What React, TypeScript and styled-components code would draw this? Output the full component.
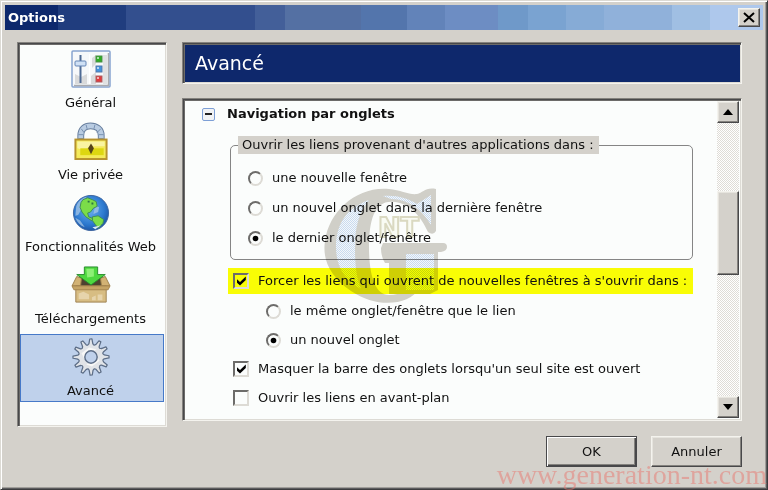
import React from "react";
import styled, { createGlobalStyle, css } from "styled-components";

const c = {
  face: "#d4d1cb",
  paper: "#fbfdfc",
  shadow: "#84827e",
  dark: "#48484a",
  light: "#f4f3ee",
  navy: "#0e286c",
};

const Global = createGlobalStyle`
  * { box-sizing: border-box; }
  body {
    margin: 0;
    background: ${c.face};
    color: #111;
    font: 13px/18px "DejaVu Sans", sans-serif;
  }
  button, input { font: inherit; color: inherit; margin: 0; }
`;

const raised = css`
  background: ${c.face};
  border: 1px solid;
  border-color: ${c.light} ${c.dark} ${c.dark} ${c.light};
  box-shadow: inset -1px -1px 0 ${c.shadow}, inset 1px 1px 0 #e6e4de;
`;

const sunken = css`
  border: 1px solid;
  border-color: ${c.shadow} ${c.light} ${c.light} ${c.shadow};
  box-shadow: inset 1px 1px 0 ${c.dark}, inset 2px 2px 0 #6c6b69, inset -1px -1px 0 #dddbd5;
`;

const Window = styled.main`
  position: relative;
  display: flex;
  flex-direction: column;
  min-height: 100vh;
  padding: 4px;
  border: 1px solid;
  border-color: #dcdad4 #3c3c3e #3c3c3e #dcdad4;
  box-shadow: inset 1px 1px 0 #fff, inset -1px -1px 0 #5c5c5e, inset -2px -2px 0 #a09e9a;
`;

const TitleBar = styled.header`
  display: flex;
  align-items: center;
  justify-content: space-between;
  height: 25px;
  padding: 0 3px;
  color: #fff;
  font-weight: bold;
  background: linear-gradient(
    90deg,
    #0d286c 7%, #203d7e 7% 16%, #334f8e 16% 33%, #435f99 33% 37%, #5470a3 37% 47%,
    #5375ac 47% 53%, #6283b9 53% 58%, #6d8dc3 58% 65%, #6f99c9 65% 69%, #7aa3d1 69% 74%,
    #86abd6 74% 79%, #90b1da 79% 88%, #a0bfe3 88% 93%, #aec8ec 93%
  );
`;

const TitleText = styled.h1`
  margin: 0;
  font-size: 13px;
  line-height: 18px;
`;

const CloseButton = styled.button`
  ${raised}
  display: grid;
  place-items: center;
  width: 22px;
  height: 19px;
  padding: 0;
`;

const Body = styled.div`
  display: grid;
  grid-template-columns: 150px minmax(0, 1fr);
  gap: 15px;
  flex: 1;
  padding: 12px 21px 0 12px;
`;

const Sidebar = styled.nav`
  ${sunken}
  display: flex;
  flex-direction: column;
  gap: 4px;
  margin-bottom: -6px;
  padding: 3px 2px;
  background: ${c.paper};
`;

const Category = styled.button<{ $selected?: boolean }>`
  display: flex;
  flex-direction: column;
  align-items: center;
  gap: 6px;
  height: 68px;
  padding: 3px 3px 0 0;
  border: 1px solid ${(p) => (p.$selected ? "#4679c8" : "transparent")};
  background: ${(p) => (p.$selected ? "#bfd1eb" : "transparent")};
  white-space: nowrap;
`;

const Main = styled.section`
  display: flex;
  flex-direction: column;
  gap: 14px;
  min-width: 0;
`;

const Heading = styled.h2`
  ${sunken}
  margin: 0;
  padding: 9px 12px;
  background: ${c.navy};
  color: #fff;
  font-size: 19px;
  line-height: 22px;
  font-weight: normal;
`;

const Panel = styled.div`
  ${sunken}
  display: grid;
  grid-template-columns: minmax(0, 1fr) 22px;
  flex: 1;
  padding: 2px;
  background: ${c.paper};
`;

const Content = styled.div`
  position: relative;
  padding: 4px 24px 3px 17px;
`;

const GroupTitle = styled.h3`
  display: flex;
  align-items: center;
  gap: 12px;
  margin: 0 0 13px;
  font-size: 13px;
  line-height: 18px;
`;

const Toggle = styled.button`
  display: grid;
  place-items: center;
  width: 13px;
  height: 13px;
  padding: 0;
  border: 1px solid #7d9fd6;
  border-radius: 2px;
  background: #f1f3f5;
`;

const Settings = styled.div`
  padding-left: 26px;
`;

const Group = styled.fieldset`
  display: flex;
  flex-direction: column;
  gap: 12px;
  min-width: 0;
  margin: 0 0 8px 2px;
  padding: 15px 17px 12px;
  border: 1px solid #858585;
  border-radius: 5px;
`;

const Legend = styled.legend`
  margin-left: -10px;
  padding: 0 5px 0 4px;
  background: ${c.face};
`;

const OptionRow = styled.label<{ $marked?: boolean }>`
  display: flex;
  align-items: center;
  gap: 9px;
  width: 100%;
  white-space: nowrap;
  ${(p) =>
    p.$marked &&
    css`
      background: #f9fd05;
    `}
`;

const SubOptions = styled.div`
  display: flex;
  flex-direction: column;
  gap: 11px;
  padding-left: 38px;
`;

const OptionList = styled.div`
  display: flex;
  flex-direction: column;
  gap: 11px;

  > ${OptionRow} {
    padding-left: 5px;
  }
  > ${OptionRow}:first-child {
    padding-top: 4px;
    padding-bottom: 4px;
    margin-bottom: -3px;
  }
`;

const Mark = styled.span`
  display: grid;
  place-items: center;
  flex: none;

  > * {
    grid-area: 1 / 1;
  }
  > svg {
    pointer-events: none;
  }
`;

const Tick = styled.input`
  appearance: none;
  width: 16px;
  height: 16px;
  background: transparent;
  border: 2px solid;
  border-color: #6d6c6a #dddbd5 #dddbd5 #6d6c6a;

  &:not(:checked) + svg {
    display: none;
  }
`;

const Radio = styled(Tick)`
  width: 15px;
  height: 15px;
  border-radius: 50%;
`;

const Option = ({
  kind,
  name,
  label,
  checked,
  marked,
}: {
  kind: "radio" | "checkbox";
  name: string;
  label: string;
  checked?: boolean;
  marked?: boolean;
}) => (
  <OptionRow $marked={marked}>
    <Mark>
      {kind === "radio" ? (
        <>
          <Radio type="radio" name={name} defaultChecked={checked} />
          <svg width="15" height="15">
            <circle cx="7.5" cy="7.5" r="2.8" fill="#000" />
          </svg>
        </>
      ) : (
        <>
          <Tick type="checkbox" name={name} defaultChecked={checked} />
          <svg width="16" height="16">
            <path d="M4 6.2 7 9 12.8 3.4V7L7 12.6 4 9.8Z" fill="#000" />
          </svg>
        </>
      )}
    </Mark>
    {label}
  </OptionRow>
);

const ScrollBar = styled.div`
  display: grid;
  grid-template-rows: 22px 1fr 22px;
  background: repeating-conic-gradient(#fff 0 25%, #dedcd6 0 50%) 0 0 / 2px 2px;
`;

const ScrollButton = styled.button`
  ${raised}
  display: grid;
  place-items: center;
  padding: 0;
`;

const Track = styled.div`
  display: grid;
  grid-template-rows: 69fr 84fr 122fr;
`;

const Thumb = styled.div`
  ${raised}
  grid-row: 2;
`;

const Footer = styled.footer`
  display: flex;
  justify-content: flex-end;
  gap: 14px;
  padding: 15px 21px 18px;
`;

const Action = styled.button<{ $primary?: boolean }>`
  ${raised}
  width: 91px;
  height: 31px;
  padding: 0;
  ${(p) =>
    p.$primary &&
    css`
      border-color: ${c.dark};
      box-shadow: inset 1px 1px 0 #fff, inset -1px -1px 0 ${c.dark}, inset -2px -2px 0 ${c.shadow};
    `}
`;

const SiteStamp = styled.div`
  position: absolute;
  right: 0;
  bottom: 3px;
  color: #e87870;
  opacity: 0.5;
  font: 28px/22px "Liberation Serif", serif;
  pointer-events: none;
`;

const Logo = styled.svg`
  position: absolute;
  left: 138px;
  top: 86px;
  mix-blend-mode: multiply;
  pointer-events: none;
`;

const SettingsIcon = () => (
  <svg width="40" height="38" viewBox="0 0 40 38">
    <rect x="1" y="1" width="38" height="36" rx="1" fill="#f6f8fa" stroke="#88a4d0" strokeWidth="1.5" />
    <path d="M3 35.5H37.5V3" fill="none" stroke="#a9aaae" strokeWidth="1.5" />
    <path d="M4 24l6 3 6-3v10H4zM21 8l4-3v9l-4 4zM20 26l5-4v12h-5z" fill="#d9dadb" />
    <path d="M32 5h4v29h-4z" fill="#e0e1e2" />
    <path d="M18.500 4V34" stroke="#fff" />
    <path d="M9.500 5V33" stroke="#4e6a94" strokeWidth="2" />
    <rect x="4" y="11" width="11" height="5" rx="1" fill="#cfe0f5" stroke="#6585b5" />
    <rect x="25" y="6" width="6" height="6" fill="#2fae24" stroke="#4b8d47" />
    <rect x="25" y="16" width="6" height="6" fill="#4294df" stroke="#5579a9" />
    <rect x="25" y="26" width="6" height="6" fill="#e33b3e" stroke="#a76163" />
    <path d="M26 7h2v2h-2zM26 17h2v2h-2zM26 27h2v2h-2z" fill="#fff" opacity=".6" />
  </svg>
);

const LockIcon = () => (
  <svg width="38" height="38" viewBox="0 0 38 39">
    <path d="M8.500 18V14C8.500 7 13 4 18.500 4S29.500 7 29.500 14v4" fill="none" stroke="#687f9e" strokeWidth="7" />
    <path d="M8.500 18V14C8.500 7 13 4 18.500 4S29.500 7 29.500 14v4" fill="none" stroke="#b9cce2" strokeWidth="5" />
    <path d="M6 17h5M6 13h5M9 7l3 4M14 3l1 4M23 3l-1 4M29 7l-4 4M27 13h5M27 17h5" stroke="#7790b0" />
    <rect x="3" y="18" width="32" height="20" fill="#f4ea5a" stroke="#b6922e" strokeWidth="2" />
    <path d="M5 20h28v5H18l-6 4-7-2z" fill="#f9f4a2" />
    <path d="M8 27h24v7H8z" fill="#ddd711" />
    <path d="M19 22l3 5-3 6-3-6z" fill="#55451a" />
  </svg>
);

const GlobeIcon = () => (
  <svg width="38" height="38" viewBox="0 0 39 40">
    <defs>
      <radialGradient id="sea" cx=".45" cy=".4" r=".65">
        <stop offset="0" stopColor="#6eb2ef" />
        <stop offset=".65" stopColor="#2c79cf" />
        <stop offset="1" stopColor="#1a4f9e" />
      </radialGradient>
    </defs>
    <circle cx="19.500" cy="20" r="18.500" fill="url(#sea)" stroke="#3d659f" />
    <path d="M4 13C6 7 11 4 15 3l-3 5-2 7-4 7-3 1zM24 12l4 2-1 5-5 2zM3 25l5 3 5 7C8 33 5 30 3 25z" fill="#a6c5e6" opacity=".75" />
    <path d="M11 6l5-2 5 2 4 2 1 5-4 2-3 4-3 1 1 4 5 2-2 2-6-4-4-5-2-5 1-5z" fill="#7bdd49" stroke="#3d8c55" />
    <path d="M21 24l6-1 6 4-1 4-5 5-3-4-3-4z" fill="#7bdd49" stroke="#3d8c55" />
    <path d="M16 8h2M20 10h2" stroke="#2d7542" strokeWidth="2" />
    <path d="M21 35l5-1 4-1-6 4z" fill="#d9e9f7" />
  </svg>
);

const DownloadIcon = () => (
  <svg width="40" height="38" viewBox="0 0 42 40">
    <path d="M8 12h26l3 10H5z" fill="#4d4230" />
    <path d="M1 21L6 11l5 2-1 8zM41 21l-5-10-5 2 1 8z" fill="#d2b274" stroke="#9a7d48" />
    <path d="M5 21h32v17H5z" fill="#d7bd83" stroke="#9e8251" />
    <path d="M1 21h40l-2 4H3z" fill="#c5a465" stroke="#a5854e" />
    <path d="M8 29l5-2 6 3v5H8zM22 33l4-2v5h-4zM28 30h5v6h-5z" fill="#e6d4ac" />
    <path d="M14 1h14v8h8L21 20 6 9h8z" fill="#4dd83f" stroke="#278b2b" />
    <path d="M16 3h8v8l-7 1z" fill="#8cf075" />
  </svg>
);

const gearPath = Array.from({ length: 12 }, (_, i) => {
  const at = (r: number, d: number) => {
    const a = ((i * 30 + d) * Math.PI) / 180;
    return `${(20 + r * Math.sin(a)).toFixed(2)} ${(20 - r * Math.cos(a)).toFixed(2)}`;
  };
  return `${i ? "L" : "M"}${at(14, -9)}L${at(19, -4)}L${at(19, 3)}L${at(14, 8)}Q${at(12, 14)} ${at(14, 20)}`;
}).join("");

const GearIcon = () => (
  <svg width="38" height="38" viewBox="0 0 40 40">
    <path d={gearPath + "Z"} fill="#e1e4e8" stroke="#5d6e87" strokeWidth="1.300" strokeLinejoin="round" />
    <path d="M10 16l8-6 8 2-6 3-7 7zM27 21l2 3-8 6-6-2z" fill="#f8f8f7" />
    <circle cx="20" cy="20" r="6.500" fill="#bfd1eb" stroke="#5d6e87" strokeWidth="1.500" />
  </svg>
);

const GLogo = () => (
  <Logo width="126" height="118" viewBox="0 0 126 118" aria-hidden="true">
    <defs>
      <pattern id="dots" width="2" height="2" patternUnits="userSpaceOnUse">
        <rect width="2" height="2" fill="#f8fafd" />
        <path d="M0 0h1v1H0zM1 1h1v1H1z" fill="#ccdcf2" />
      </pattern>
    </defs>
    <path
      d="M113 2v42q-3 5-8 1C98 30 88 17 72 15C52 12 46 32 46 60s6 48 20 48c12 0 20-6 30-6C86 118 54 122 28 104C8 90 -1 74 2 54C6 24 34 -1 66 2c12 1 20 6 28 5 6-1 8-7 19-5z"
      fill={c.face}
    />
    <path d="M46 13C23 21 13 38 13 60c0 18 8 34 25 42-5-12-6-26-6-42 0-20 4-35 14-47z" fill="url(#dots)" />
    <path d="M60 9c14-1 24 2 34 8l14-9v30C100 24 86 12 68 12z" fill="url(#dots)" />
    <path d="M60 56h60q4 0 4 4t-6 5h-3v38l-8 4H66V76h-4q-4-6-4-15z" fill={c.face} />
    <path d="M83 67h28v36H83z" fill="url(#dots)" />
    <text
      x="55"
      y="50"
      fontFamily="DejaVu Sans"
      fontWeight="bold"
      fontSize="27"
      fill="#fdfdf6"
      stroke="#dedbc4"
      strokeWidth="2"
    >
      NT
    </text>
  </Logo>
);

const categories = [
  { label: "Général", icon: <SettingsIcon /> },
  { label: "Vie privée", icon: <LockIcon /> },
  { label: "Fonctionnalités Web", icon: <GlobeIcon /> },
  { label: "Téléchargements", icon: <DownloadIcon /> },
  { label: "Avancé", icon: <GearIcon />, selected: true },
];

export default function App() {
  return (
    <Window>
      <Global />
      <TitleBar>
        <TitleText>Options</TitleText>
        <CloseButton aria-label="Fermer">
          <svg width="12" height="11">
            <path d="M1 1l10 9M11 1L1 10" stroke="#000" strokeWidth="2" />
          </svg>
        </CloseButton>
      </TitleBar>
      <Body>
        <Sidebar>
          {categories.map((item) => (
            <Category key={item.label} $selected={item.selected}>
              {item.icon}
              {item.label}
            </Category>
          ))}
        </Sidebar>
        <Main>
          <Heading>Avancé</Heading>
          <Panel>
            <Content>
              <GroupTitle>
                <Toggle aria-label="Réduire">
                  <svg width="7" height="2">
                    <path d="M0 1h7" stroke="#222" strokeWidth="2" />
                  </svg>
                </Toggle>
                Navigation par onglets
              </GroupTitle>
              <Settings>
                <Group>
                  <Legend>Ouvrir les liens provenant d'autres applications dans :</Legend>
                  <Option kind="radio" name="external" label="une nouvelle fenêtre" />
                  <Option kind="radio" name="external" label="un nouvel onglet dans la dernière fenêtre" />
                  <Option kind="radio" name="external" label="le dernier onglet/fenêtre" checked />
                </Group>
                <OptionList>
                  <Option
                    kind="checkbox"
                    name="force"
                    label="Forcer les liens qui ouvrent de nouvelles fenêtres à s'ouvrir dans :"
                    checked
                    marked
                  />
                  <SubOptions>
                    <Option kind="radio" name="forced" label="le même onglet/fenêtre que le lien" />
                    <Option kind="radio" name="forced" label="un nouvel onglet" checked />
                  </SubOptions>
                  <Option
                    kind="checkbox"
                    name="hide"
                    label="Masquer la barre des onglets lorsqu'un seul site est ouvert"
                    checked
                  />
                  <Option kind="checkbox" name="front" label="Ouvrir les liens en avant-plan" />
                </OptionList>
              </Settings>
              <GLogo />
            </Content>
            <ScrollBar>
              <ScrollButton aria-label="Défiler vers le haut">
                <svg width="10" height="6">
                  <path d="M5 0l5 6H0z" />
                </svg>
              </ScrollButton>
              <Track>
                <Thumb />
              </Track>
              <ScrollButton aria-label="Défiler vers le bas">
                <svg width="10" height="6">
                  <path d="M0 0h10L5 6z" />
                </svg>
              </ScrollButton>
            </ScrollBar>
          </Panel>
        </Main>
      </Body>
      <Footer>
        <Action $primary>OK</Action>
        <Action>Annuler</Action>
      </Footer>
      <SiteStamp>www.generation-nt.com</SiteStamp>
    </Window>
  );
}
